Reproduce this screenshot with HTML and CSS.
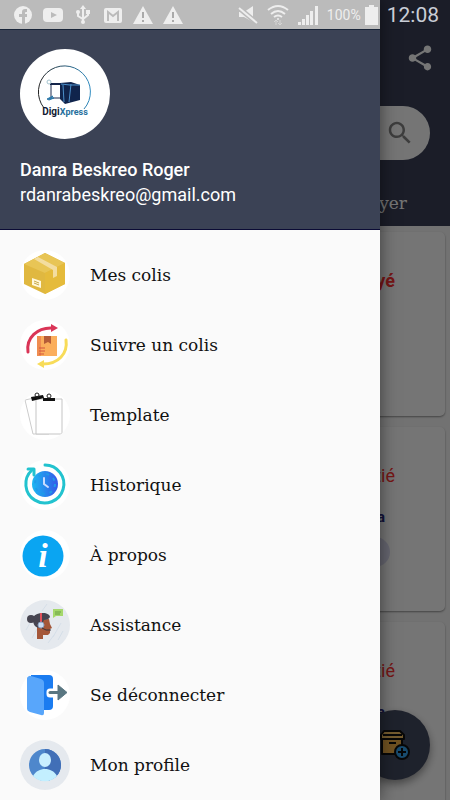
FILE: index.html
```html
<!DOCTYPE html>
<html lang="fr">
<head>
    <meta charset="UTF-8">
    <meta name="viewport" content="width=device-width, initial-scale=1.0">
    <title>DigiXpress</title>
    <link rel="stylesheet" href="styles.css">
</head>
<body>
    <!-- Page under the drawer -->
    <main class="app">
        <header class="app-header">
            <div class="toolbar">
                <button class="icon-btn" aria-label="Partager">
                    <svg width="30" height="30" viewBox="0 0 24 24" fill="#fff"><path d="M18 16.08c-.76 0-1.44.3-1.96.77L8.91 12.7c.05-.23.09-.46.09-.7s-.04-.47-.09-.7l7.05-4.11c.54.5 1.25.81 2.04.81 1.66 0 3-1.34 3-3s-1.34-3-3-3-3 1.34-3 3c0 .24.04.47.09.7L8.04 9.81C7.5 9.31 6.79 9 6 9c-1.66 0-3 1.34-3 3s1.34 3 3 3c.79 0 1.5-.31 2.04-.81l7.12 4.16c-.05.21-.08.43-.08.65 0 1.61 1.31 2.92 2.92 2.92s2.92-1.31 2.92-2.92-1.31-2.92-2.92-2.92z"/></svg>
                </button>
            </div>
            <form class="search">
                <input type="search" aria-label="Rechercher">
                <button type="button" class="icon-btn search-btn" aria-label="Lancer la recherche">
                    <svg width="30" height="30" viewBox="0 0 24 24" fill="#858585"><path d="M15.5 14h-.79l-.28-.27C15.41 12.59 16 11.11 16 9.5 16 5.91 13.09 3 9.5 3S3 5.91 3 9.5 5.91 16 9.5 16c1.61 0 3.09-.59 4.23-1.57l.27.28v.79l5 4.99L20.49 19l-4.99-5zm-6 0C7.01 14 5 11.99 5 9.5S7.01 5 9.5 5 14 7.01 14 9.5 11.99 14 9.5 14z"/></svg>
                </button>
            </form>
            <nav class="tabs"><a href="#payer">Payer</a></nav>
        </header>
        <section class="cards">
            <article class="card">
                <p class="state paid">Payé</p>
            </article>
            <article class="card">
                <p class="state">Moitié</p>
                <p class="city">Danra</p>
                <span class="chip"></span>
            </article>
            <article class="card">
                <p class="state">Moitié</p>
                <p class="city">Danra</p>
            </article>
        </section>
        <button class="fab" aria-label="Ajouter un colis">
            <svg width="46" height="40" viewBox="0 0 46 40">
                <g stroke="#111" stroke-width="2" stroke-linejoin="round">
                    <path d="M10 14h20v15H10z" fill="#f5b44a"/>
                    <path d="M12 6h16l4 4v4H9v-4z" fill="#ffc868"/>
                    <path d="M11 10h19M17 18h7"/>
                    <circle cx="30" cy="27" r="7" fill="#36a3f0"/>
                    <path d="M30 23v8M26 27h8"/>
                </g>
            </svg>
        </button>
    </main>
    <div class="scrim"></div>

    <!-- Drawer -->
    <aside class="drawer">
        <header class="account">
            <svg class="account-logo" width="90" height="90" viewBox="0 0 90 90">
                <defs>
                    <linearGradient id="ring"><stop offset="0" stop-color="#222"/><stop offset="1" stop-color="#2f8bc0"/></linearGradient>
                </defs>
                <circle cx="45" cy="45" r="45" fill="#fff"/>
                <path d="M24 59A26 26 0 1 1 64 60" fill="none" stroke="url(#ring)" stroke-width="1"/>
                <path d="M30 35.500h12M31 36v13h13" fill="none" stroke="#1a2b4e" stroke-width="1"/>
                <path d="M30 34h11v2H30z" fill="#14254a"/>
                <path d="M40 34l11-1 9 3v15l-15 4-5-5z" fill="#10244c"/>
                <path d="M43 36l1 17M51 35l-2 18M41 35l9 1 10 0" fill="none" stroke="#4b8fca" stroke-width="1"/>
                <circle cx="29" cy="33" r="2" fill="none" stroke="#a4c4cf"/>
                <path d="M27 50l6-3-2 2 3 0-5 2z" fill="#2d79aa" stroke="#2d79aa"/>
                <text class="logo-text" x="45" y="66" text-anchor="middle"><tspan fill="#111a33">Digi</tspan><tspan class="logo-light" fill="#28709d">Xpress</tspan></text>
            </svg>
            <p class="account-name">Danra Beskreo Roger</p>
            <p class="account-mail">rdanrabeskreo@gmail.com</p>
        </header>
        <nav class="menu">
            <a href="#colis">
                <svg class="menu-icon" viewBox="0 0 50 50">
                    <path d="M25 3l20 10v21L25 44 4 34V14z" fill="#e0b840"/>
                    <path d="M25 3l20 10-20 10L4 14z" fill="#e8c555"/>
                    <path d="M45 13v21L25 44V23z" fill="#e5bb3b"/>
                    <path d="M14 9l4-2 19 10v9l-4 2v-8z" fill="#f3dda0"/>
                    <path d="M12 28l9 3v7l-9-3z" fill="#fff8dc"/>
                    <path d="M14 31l5 2M14 33l5 2" stroke="#c7a848"/>
                </svg>
                Mes colis
            </a>
            <a href="#suivre">
                <svg class="menu-icon" viewBox="0 0 50 50">
                    <path d="M8 32C6 18 17 7 33 8" fill="none" stroke="#da3557" stroke-width="3" stroke-linecap="round"/>
                    <path d="M31 4l7 4-7 4z" fill="#da3557"/>
                    <path d="M46 20c2 14-8 24-23 24" fill="none" stroke="#f8dc59" stroke-width="3" stroke-linecap="round"/>
                    <path d="M24 40l-7 4 7 4z" fill="#f8dc59"/>
                    <path d="M17 16h20v20H17z" fill="#fbae5c"/>
                    <path d="M17 16h4v20h-4z" fill="#ef8d51"/>
                    <path d="M24 16h7v8l-3-2-4 2z" fill="#b55c38"/>
                    <path d="M19 28h6M19 31h6M19 34h5" stroke="#d3543e"/>
                </svg>
                Suivre un colis
            </a>
            <a href="#template">
                <svg class="menu-icon" viewBox="0 0 50 50">
                    <path d="M5 10l18-4 6 38H13z" fill="#fff" stroke="#ccc"/>
                    <path d="M16 9h26v35H16z" fill="#fff" stroke="#c5c5c5"/>
                    <path d="M11 7l12-2 1 3-12 3z" fill="#111"/>
                    <path d="M23 8h12v3H23z" fill="#111"/>
                    <circle cx="17" cy="5" r="2" fill="none" stroke="#222"/>
                    <circle cx="29" cy="6" r="2" fill="none" stroke="#222"/>
                </svg>
                Template
            </a>
            <a href="#historique">
                <svg class="menu-icon" viewBox="0 0 50 50">
                    <defs>
                        <linearGradient id="clock"><stop offset="0" stop-color="#1cb8f2"/><stop offset="1" stop-color="#3558e8"/></linearGradient>
                    </defs>
                    <path d="M25 5a19 19 0 1 1-13 5" fill="none" stroke="#23c3cf" stroke-width="3" stroke-linecap="round"/>
                    <path d="M8 9h6v6" fill="none" stroke="#23c3cf" stroke-width="3" stroke-linejoin="round" stroke-linecap="round"/>
                    <circle cx="25" cy="24" r="13" fill="url(#clock)"/>
                    <circle cx="25" cy="24" r="10" fill="none" stroke="#209be8" stroke-width="2" stroke-dasharray="3 5"/>
                    <path d="M24 18v6l4 3" fill="none" stroke="#c9dcff" stroke-width="2" stroke-linecap="round"/>
                </svg>
                Historique
            </a>
            <a href="#apropos">
                <svg class="menu-icon" viewBox="0 0 50 50">
                    <circle cx="23" cy="26" r="20.500" fill="#0aa5f2"/>
                    <text class="info-letter" x="23" y="37" text-anchor="middle" fill="#fff">i</text>
                </svg>
                À propos
            </a>
            <a href="#assistance">
                <svg class="menu-icon grey" viewBox="0 0 50 50">
                    <path d="M6 30l8-14M12 38l5-9M33 37l8-14M28 43l6-8M38 40l5-9M22 11l5-7" stroke="#d5dee8"/>
                    <path d="M18 20l11-1 1 5 2 4-2 1v4l-2 2h-5v4h-6V28z" fill="#a45739"/>
                    <circle cx="11" cy="19" r="4" fill="#464450"/>
                    <path d="M13 20c0-5 4-7 10-7 4 0 7 2 7 4-1 2-3 3-6 3l-4 8c-4 0-7-3-7-8z" fill="#464450"/>
                    <path d="M21 13v9" stroke="#e2515a" stroke-width="2"/>
                    <circle cx="21" cy="25" r="3" fill="#cbdcf2" stroke="#8ba0bf"/>
                    <path d="M22 28l4 2h5" fill="none" stroke="#39333b" stroke-width="1"/>
                    <path d="M33 9h10v7h-7l-3 2z" fill="#a5d86c"/>
                    <path d="M35 12h6M35 14h5" stroke="#689e45"/>
                </svg>
                Assistance
            </a>
            <a href="#deconnecter">
                <svg class="menu-icon" viewBox="0 0 50 50">
                    <path d="M11 5h18q4 0 4 4v27q0 4-4 4H11z" fill="#1b7cf0"/>
                    <path d="M30 22h9v-5l8 5.500-8 5.500v-4h-9z" fill="#fff" stroke="#fff" stroke-width="7" stroke-linejoin="round"/>
                    <path d="M7 9q0-4 4-3l10 3q3 1 3 4v30q0 3-3 2L10 42q-3-1-3-3z" fill="#58a6fb"/>
                    <path d="M30 22.500h10" stroke="#5a7782" stroke-width="3" stroke-linecap="round"/>
                    <path d="M38 15l9 7.500-9 7.500z" fill="#5a7782" stroke="#5a7782" stroke-linejoin="round"/>
                </svg>
                Se déconnecter
            </a>
            <a href="#profile">
                <svg class="menu-icon grey" viewBox="0 0 50 50">
                    <circle cx="25" cy="25" r="16" fill="#4e87cc"/>
                    <path d="M25 9a16 16 0 0 1 0 32z" fill="#416fb7"/>
                    <ellipse cx="25" cy="20" rx="6" ry="7" fill="#c9efff"/>
                    <path d="M13 36c3-5 7-7 12-7s9 2 12 7c-6 7-18 7-24 0z" fill="#c3efff"/>
                </svg>
                Mon profile
            </a>
        </nav>
    </aside>

    <!-- System status bar -->
    <div class="status">
        <svg width="20" height="20" viewBox="0 0 20 20"><circle cx="10" cy="10" r="9"/><path d="M9 19v-7H6V9h3V7q0-3 3-3h2v3h-1q-1 0-1 1v1h2v3h-2v7z" fill="#bbb"/></svg>
        <svg width="20" height="20" viewBox="0 0 20 20"><rect y="3" width="20" height="14" rx="4"/><path d="M8 7l6 3-6 3z" fill="#bbb"/></svg>
        <svg width="20" height="20" viewBox="0 0 20 20"><path d="M10 3v14M5 7v4l5 3 5-4V7" fill="none" stroke="#eee" stroke-width="2"/><path d="M7 4l3-4 3 4z"/><circle cx="10" cy="17" r="2"/><circle cx="5" cy="7" r="2"/><path d="M13 5h4v4h-4z"/></svg>
        <svg width="20" height="20" viewBox="0 0 20 20"><rect x="1" y="3" width="18" height="15" rx="2"/><path d="M5 16V7l5 4 5-4v9" fill="none" stroke="#bbb" stroke-width="2"/></svg>
        <svg width="20" height="20" viewBox="0 0 20 20"><path d="M10 1l10 18H0z"/><path d="M10 7v6M10 15v2" stroke="#aaa" stroke-width="2"/></svg>
        <svg width="20" height="20" viewBox="0 0 20 20"><path d="M10 1l10 18H0z"/><path d="M10 7v6M10 15v2" stroke="#aaa" stroke-width="2"/></svg>
        <div class="status-right">
            <svg width="20" height="20" viewBox="0 0 20 20"><path d="M1 7h5l9-6v16l-9-5H1z"/><path d="M1 3l18 15" stroke="#bbb" stroke-width="5"/><path d="M1 3l18 15" stroke="#eee" stroke-width="2"/></svg>
            <svg width="22" height="22" viewBox="0 0 22 22"><path d="M1 6q10-8 20 0M4 10q7-6 14 0M7 13q4-3 8 0" fill="none" stroke="#eee" stroke-width="2"/><circle cx="11" cy="15" r="1"/><path d="M9 21v-5M13 16v5M7 18l2-2 2 2M11 19l2 2 2-2" fill="none" stroke="#d5d5d5" stroke-width="1"/></svg>
            <svg width="20" height="20" viewBox="0 0 20 20"><path d="M0 17h3v3H0zM4 14h3v6H4zM8 10h3v10H8zM12 6h3v14h-3zM17 1h3v19h-3z"/></svg>
            <span class="battery-level">100%</span>
            <svg class="battery" width="13" height="20" viewBox="0 0 13 20"><path d="M4 0h5v2h4v18H0V2h4z"/></svg>
            <span class="time">12:08</span>
        </div>
    </div>
</body>
</html>
```
FILE: styles.css
```css
* {
    margin: 0;
    padding: 0;
    box-sizing: border-box;
}
body {
    position: relative;
    min-height: 100vh;
    overflow: hidden;
    font-family: Roboto, sans-serif;
    background-color: #fafafa;
}
svg {
    display: block;
    flex-shrink: 0;
}
a {
    color: inherit;
    text-decoration: none;
}
.icon-btn {
    border: none;
    background: none;
    cursor: pointer;
}

/* page */
.app {
    height: 100vh;
    overflow: hidden;
    background-color: #f8f8f8;
}
.app-header {
    padding: 30px 20px 0;
    background-color: #3b4158;
    color: white;
}
.toolbar {
    display: flex;
    justify-content: flex-end;
    align-items: center;
    height: 56px;
    margin-right: -5px;
}
.search {
    display: flex;
    align-items: center;
    height: 54px;
    margin-top: 20px;
    padding: 0 15px 0 20px;
    border-radius: 27px;
    background-color: white;
}
.search input {
    flex: 1;
    min-width: 0;
    border: none;
    outline: none;
    background: none;
    font-size: 18px;
}
.tabs {
    display: flex;
    justify-content: flex-end;
    align-items: center;
    height: 66px;
    padding: 20px 23px 0;
    font-family: "DejaVu Serif", serif;
    font-size: 17px;
}
.cards {
    display: flex;
    flex-direction: column;
    gap: 11px;
    padding: 6px 5px;
}
.card {
    display: flex;
    flex-direction: column;
    align-items: flex-end;
    flex-shrink: 0;
    height: 184px;
    padding: 36px 50px 0;
    border-radius: 5px;
    background-color: white;
    box-shadow: 0 1px 2px rgba(0, 0, 0, 0.4);
}
.state {
    font-family: Roboto, sans-serif;
    font-size: 18px;
    line-height: 26px;
    color: #ff3030;
}
.state.paid {
    font-weight: bold;
}
.city {
    margin: 16px 10px 0;
    font-size: 15px;
    font-weight: bold;
    line-height: 24px;
    color: #2c2a80;
}
.chip {
    width: 90px;
    height: 30px;
    margin: 8px 5px 0;
    border-radius: 15px;
    background-color: #dcdcf2;
}
.fab {
    position: absolute;
    right: 20px;
    bottom: 20px;
    display: flex;
    justify-content: center;
    align-items: center;
    width: 70px;
    height: 70px;
    border: none;
    border-radius: 50%;
    background-color: #434a60;
    box-shadow: 0 4px 8px rgba(0, 0, 0, 0.4);
    cursor: pointer;
}
.scrim {
    position: absolute;
    inset: 0;
    background-color: rgba(0, 0, 0, 0.54);
}

/* drawer */
.drawer {
    position: absolute;
    top: 0;
    bottom: 0;
    left: 0;
    right: 70px;
    overflow: hidden;
    border-top: 29px solid #bbb;
    background-color: #fafafa;
    box-shadow: 0 0 16px rgba(0, 0, 0, 0.5);
}
.account {
    padding: 19px 20px 22px;
    border-top: 1px solid #182438;
    border-bottom: 1px solid #0b0b35;
    background-color: #3b4255;
    color: white;
    font-size: 18px;
    line-height: 25px;
}
.account-logo {
    margin-bottom: 18px;
}
.account-name {
    font-weight: 500;
}
.logo-text {
    font-family: "Liberation Sans Narrow", Roboto, sans-serif;
    font-size: 10px;
    font-weight: bold;
}
.logo-light {
    font-size: 9px;
}
.menu {
    padding: 10px 0;
    font-family: "DejaVu Serif", serif;
    font-size: 17px;
    color: #111;
}
.menu a {
    display: flex;
    align-items: center;
    gap: 20px;
    height: 70px;
    padding: 0 20px;
}
.menu-icon {
    width: 50px;
    height: 50px;
    border-radius: 50%;
    background-color: white;
}
.menu-icon.grey {
    background-color: #e5e9ee;
}
.info-letter {
    font-family: "Liberation Serif", serif;
    font-size: 34px;
    font-weight: bold;
    font-style: italic;
}

/* status bar */
.status {
    position: absolute;
    top: 0;
    left: 0;
    right: 0;
    display: flex;
    align-items: center;
    gap: 10px;
    height: 30px;
    padding: 0 11px 0 13px;
    color: #eee;
    fill: #eee;
}
.status-right {
    display: flex;
    align-items: center;
    gap: 9px;
    margin-left: auto;
}
.battery-level {
    font-size: 14px;
}
.battery {
    margin-left: -5px;
}
.time {
    font-size: 21px;
    color: #c9cdd6;
}
```
